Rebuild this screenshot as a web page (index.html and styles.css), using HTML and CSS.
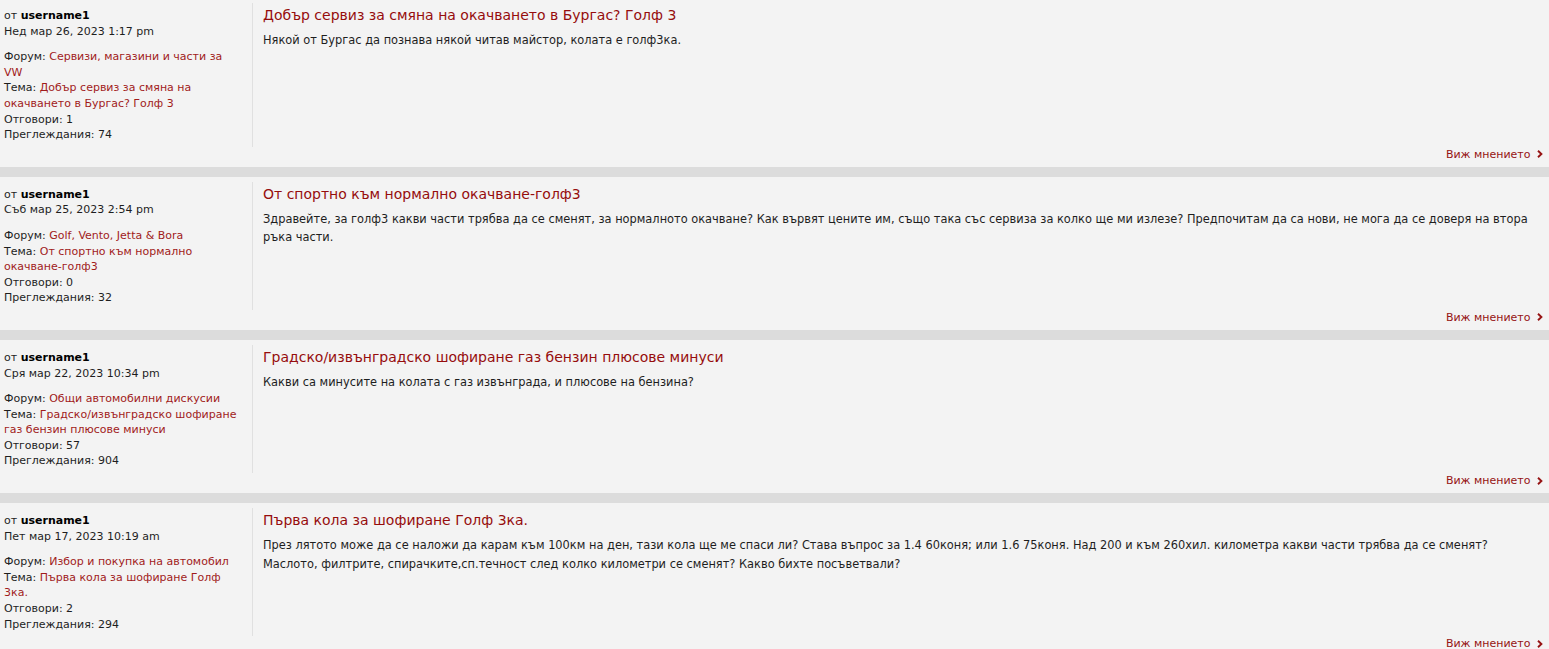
FILE: index.html
```html
<!DOCTYPE html>
<html lang="bg">
<head>
    <meta charset="utf-8">
    <title>Резултати от търсенето</title>
    <link rel="stylesheet" href="styles.css">
</head>
<body>
    <div class="results">

        <div class="search-post">
            <div class="post-inner">
                <dl class="postprofile">
                    <dt>от <a class="username" href="#">username1</a></dt>
                    <dd class="post-date">Нед мар 26, 2023 1:17 pm</dd>
                    <dd>Форум: <a href="#">Сервизи, магазини и части за VW</a></dd>
                    <dd>Тема: <a href="#">Добър сервиз за смяна на окачването в Бургас? Голф 3</a></dd>
                    <dd>Отговори: 1</dd>
                    <dd>Преглеждания: 74</dd>
                </dl>
                <div class="postbody">
                    <h3><a href="#">Добър сервиз за смяна на окачването в Бургас? Голф 3</a></h3>
                    <div class="content">Някой от Бургас да познава някой читав майстор, колата е голф3ка.</div>
                </div>
            </div>
            <div class="post-footer">
                <a class="jump" href="#">Виж мнението <svg class="chevron" width="6" height="8" viewBox="0 0 6 8"><path d="M1 0.8 L4.4 4 L1 7.2" fill="none" stroke="currentColor" stroke-width="1.9"/></svg></a>
            </div>
        </div>

        <div class="search-post">
            <div class="post-inner">
                <dl class="postprofile">
                    <dt>от <a class="username" href="#">username1</a></dt>
                    <dd class="post-date">Съб мар 25, 2023 2:54 pm</dd>
                    <dd>Форум: <a href="#">Golf, Vento, Jetta &amp; Bora</a></dd>
                    <dd>Тема: <a href="#">От спортно към нормално окачване-голф3</a></dd>
                    <dd>Отговори: 0</dd>
                    <dd>Преглеждания: 32</dd>
                </dl>
                <div class="postbody">
                    <h3><a href="#">От спортно към нормално окачване-голф3</a></h3>
                    <div class="content">Здравейте, за голф3 какви части трябва да се сменят, за нормалното окачване? Как вървят цените им, също така със сервиза за колко ще ми излезе? Предпочитам да са нови, не мога да се доверя на втора ръка части.</div>
                </div>
            </div>
            <div class="post-footer">
                <a class="jump" href="#">Виж мнението <svg class="chevron" width="6" height="8" viewBox="0 0 6 8"><path d="M1 0.8 L4.4 4 L1 7.2" fill="none" stroke="currentColor" stroke-width="1.9"/></svg></a>
            </div>
        </div>

        <div class="search-post">
            <div class="post-inner">
                <dl class="postprofile">
                    <dt>от <a class="username" href="#">username1</a></dt>
                    <dd class="post-date">Сря мар 22, 2023 10:34 pm</dd>
                    <dd>Форум: <a href="#">Общи автомобилни дискусии</a></dd>
                    <dd>Тема: <a href="#">Градско/извънградско шофиране газ бензин плюсове минуси</a></dd>
                    <dd>Отговори: 57</dd>
                    <dd>Преглеждания: 904</dd>
                </dl>
                <div class="postbody">
                    <h3><a href="#">Градско/извънградско шофиране газ бензин плюсове минуси</a></h3>
                    <div class="content">Какви са минусите на колата с газ извънграда, и плюсове на бензина?</div>
                </div>
            </div>
            <div class="post-footer">
                <a class="jump" href="#">Виж мнението <svg class="chevron" width="6" height="8" viewBox="0 0 6 8"><path d="M1 0.8 L4.4 4 L1 7.2" fill="none" stroke="currentColor" stroke-width="1.9"/></svg></a>
            </div>
        </div>

        <div class="search-post">
            <div class="post-inner">
                <dl class="postprofile">
                    <dt>от <a class="username" href="#">username1</a></dt>
                    <dd class="post-date">Пет мар 17, 2023 10:19 am</dd>
                    <dd>Форум: <a href="#">Избор и покупка на автомобил</a></dd>
                    <dd>Тема: <a href="#">Първа кола за шофиране Голф 3ка.</a></dd>
                    <dd>Отговори: 2</dd>
                    <dd>Преглеждания: 294</dd>
                </dl>
                <div class="postbody">
                    <h3><a href="#">Първа кола за шофиране Голф 3ка.</a></h3>
                    <div class="content">През лятото може да се наложи да карам към 100км на ден, тази кола ще ме спаси ли? Става въпрос за 1.4 60коня; или 1.6 75коня. Над 200 и към 260хил. километра какви части трябва да се сменят? Маслото, филтрите, спирачките,сп.течност след колко километри се сменят? Какво бихте посъветвали?</div>
                </div>
            </div>
            <div class="post-footer">
                <a class="jump" href="#">Виж мнението <svg class="chevron" width="6" height="8" viewBox="0 0 6 8"><path d="M1 0.8 L4.4 4 L1 7.2" fill="none" stroke="currentColor" stroke-width="1.9"/></svg></a>
            </div>
        </div>

    </div>
</body>
</html>
```

FILE: styles.css
```css
body {
    font-family: "DejaVu Sans", Verdana, sans-serif;
    font-size: 11px;
    color: #1e1e1e;
    background-color: #dcdcdc;
    margin: 0;
    padding: 0;
}

a {
    color: #a11b1b;
    text-decoration: none;
}

.results {
    margin-top: -2px;
}

.search-post {
    background-color: #f3f3f3;
    padding: 5px 5px 4px 4px;
    margin-bottom: 10px;
}

.post-inner {
    display: flex;
}

.postprofile {
    width: 240px;
    margin: 0;
    padding: 5px 8px 4px 0;
    border-right: 1px solid #e0e0e0;
    line-height: 15.6px;
}

.postprofile dd {
    margin: 0;
}

.postprofile .post-date {
    margin-bottom: 10px;
}

.postprofile .username {
    color: #000;
    font-weight: bold;
}

.postbody {
    flex: 1;
    padding-left: 10px;
}

.postbody h3 {
    font-family: "DejaVu Sans", Verdana, sans-serif;
    font-size: 14px;
    font-weight: normal;
    line-height: 20px;
    margin: 0 0 6px 0;
    padding-top: 2px;
}

.postbody h3 a {
    color: #960d0d;
}

.content {
    font-size: 11.4px;
    line-height: 18.6px;
    color: #1e1e1e;
}

.post-footer {
    text-align: right;
    line-height: 16px;
    padding-right: 1px;
}

.jump {
    color: #961414;
}

.chevron {
    margin-left: 3px;
    vertical-align: -0.5px;
}
```
